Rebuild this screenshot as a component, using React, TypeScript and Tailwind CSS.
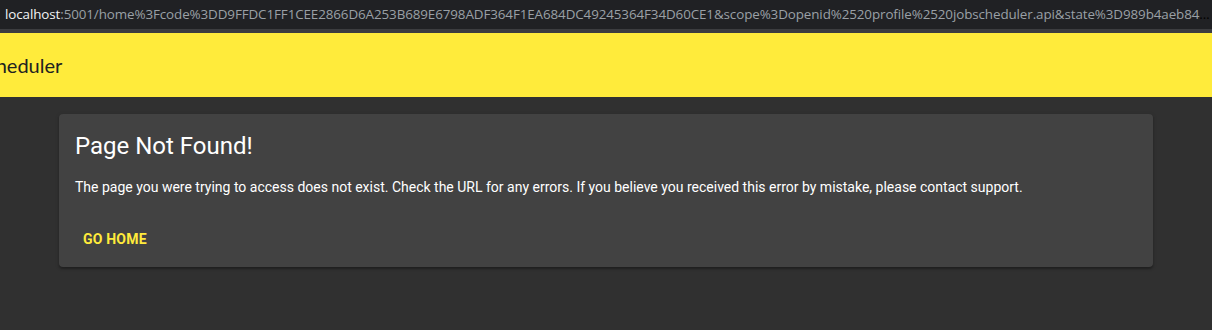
export default function App() {
  const url =
    '5001/home%3Fcode%3DD9FFDC1FF1CEE2866D6A253B689E6798ADF364F1EA684DC49245364F34D60CE1&scope%3Dopenid%2520profile%2520jobscheduler.api&state%3D989b4aeb84c1f2e0';

  return (
    <div className="min-h-[330px] bg-[#303030] font-['Roboto',sans-serif]">
      {/* Address bar */}
      <div className="h-[29px] bg-[#202124] flex items-center pl-[5px] pr-[2px] overflow-hidden">
        <div className="whitespace-nowrap overflow-hidden text-ellipsis text-[13.4px] font-['Open_Sans',sans-serif] tracking-[-0.1px]">
          <span className="text-[#f1f3f4]">localhost</span>
          <span className="text-[#9aa0a6]">:{url}</span>
        </div>
      </div>
      <div className="h-[4px] bg-[#3c3d40]" />

      {/* App bar */}
      <header className="h-[64px] bg-[#ffeb3b] flex items-center overflow-hidden">
        <h1 className="-ml-[55px] whitespace-nowrap text-[20px] text-[#212121] font-['Lato',sans-serif]">
          JobScheduler
        </h1>
      </header>

      {/* Content */}
      <main className="px-[59px] pt-[17px] pb-[64px]">
        <div className="bg-[#424242] rounded-[4px] shadow-[0_2px_2px_rgba(0,0,0,0.25),0_1px_4px_rgba(0,0,0,0.15)] pt-[16px] pb-[10px]">
          <h2 className="px-[16px] text-[24px] leading-[32px] text-white">Page Not Found!</h2>
          <p className="px-[16px] mt-[15px] text-[14px] leading-[20px] text-white">
            The page you were trying to access does not exist. Check the URL for any errors. If you believe you received this error by mistake, please contact support.
          </p>
          <div className="px-[8px] mt-[24px]">
            <button className="h-[36px] px-[16px] text-[14px] font-bold uppercase tracking-[0.2px] text-[#ffeb3b] rounded-[4px]">
              Go Home
            </button>
          </div>
        </div>
      </main>
    </div>
  );
}
